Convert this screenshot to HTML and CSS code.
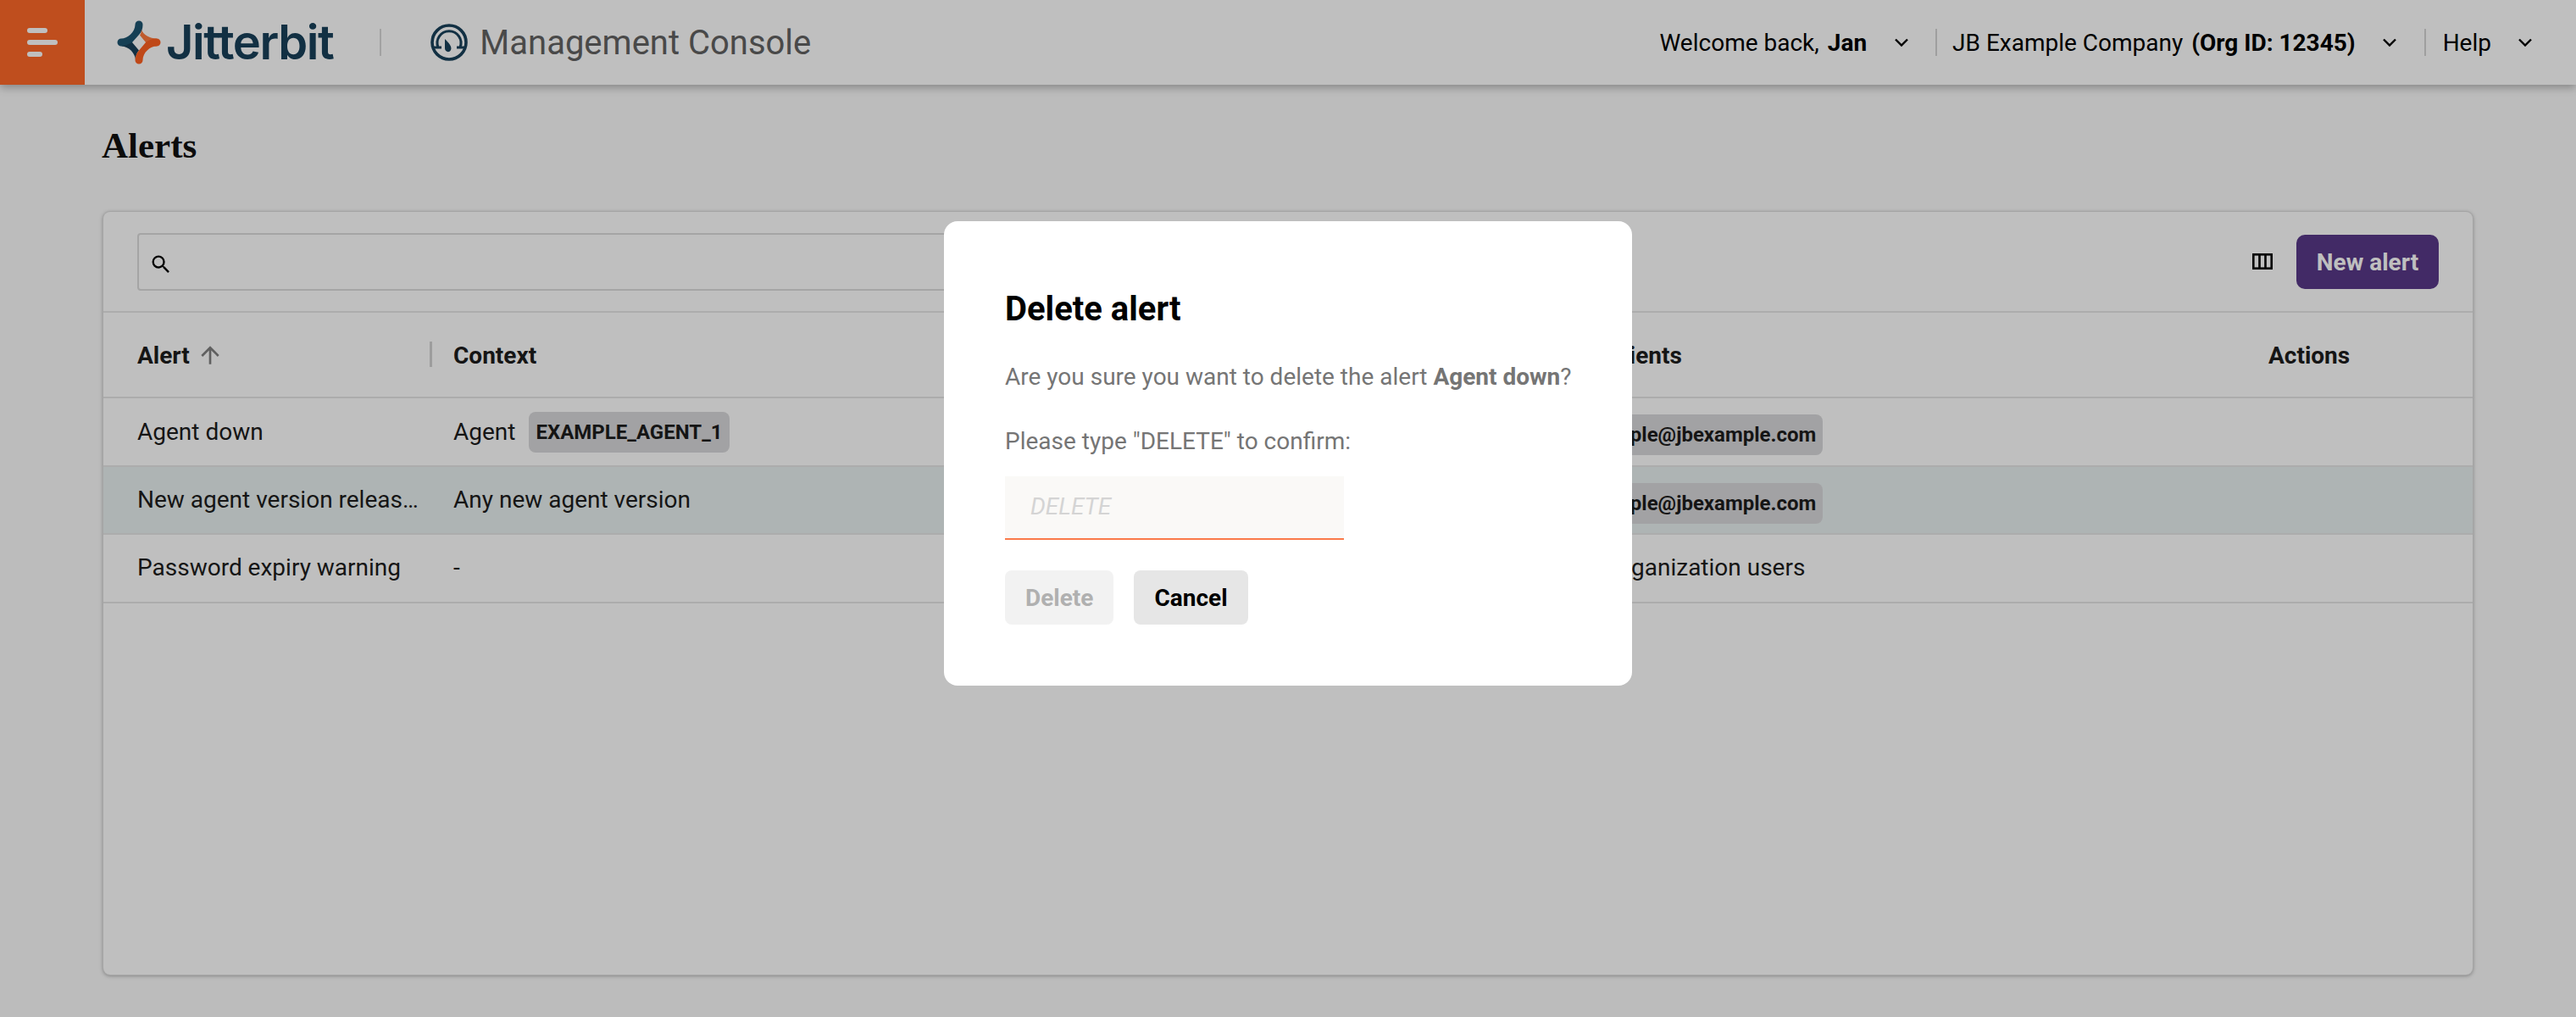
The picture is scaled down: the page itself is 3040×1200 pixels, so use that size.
FILE: index.html
```html
<!DOCTYPE html>
<html lang="en">
<head>
<meta charset="utf-8">
<title>Alerts - Management Console</title>
<link rel="stylesheet" href="styles.css">
</head>
<body>
<header class="topbar">
  <button class="menu-btn" aria-label="Menu"><span class="bar bar-a"></span><span class="bar bar-b"></span><span class="bar bar-c"></span></button>
  <div class="brand">
    <svg class="logo-mark" viewBox="0 0 52 52">
      <path fill="#18405a" d="M14 26L18 26L26 35.5C23.5 38 22.5 41 22 46C21 39 15 31 5 30.5Z"/>
      <path fill="#1d5471" d="M21.5 5A4.5 4.5 0 0 1 30.5 5C30.5 10 29 14 26 17L18 26C14 28 9 30.5 5 30.5A4.5 4.5 0 0 1 5 21.5C12 21.5 21.5 14 21.5 5Z"/>
      <path fill="#ff7a3e" d="M29 11C31 17 39 21.5 47 21.5V30.5C43 30.5 38 29 34 26L27 17.5C28.5 15.5 29 13 29 11Z"/>
      <path fill="#ff6020" d="M47 21.5A4.5 4.5 0 0 1 47 30.5C39 30.5 30.5 38 30.5 47A4.5 4.5 0 0 1 21.5 47C21.5 43 23 38.5 26 35.5L34 26C37 23.5 42 21.5 47 21.5Z"/>
    </svg>
    <span class="logo-text">Jitterbit</span>
  </div>
  <span class="brand-sep"></span>
  <svg class="gauge" viewBox="0 0 44 44" fill="none" stroke="#18405a">
    <circle cx="22" cy="22" r="20" stroke-width="3.6"/>
    <path d="M9 28A14 14 0 1 1 35 28" stroke-width="3"/>
    <path d="M3 28H13M31 28H41" stroke-width="3"/>
    <path d="M17 18C21 22 26 27 24 31C22 35 17 33 17 29Z" fill="#18405a" stroke="none"/>
  </svg>
  <span class="app-name">Management Console</span>
  <nav class="user-nav">
    <div class="nav-item nav-welcome"><span>Welcome back, <b>Jan</b></span><svg class="chev" viewBox="0 0 16 10"><path d="M1 1.5l7 7 7-7"/></svg></div>
    <div class="nav-item nav-org"><span>JB Example Company <b>(Org ID: 12345)</b></span><svg class="chev" viewBox="0 0 16 10"><path d="M1 1.5l7 7 7-7"/></svg></div>
    <div class="nav-item nav-help"><span>Help</span><svg class="chev" viewBox="0 0 16 10"><path d="M1 1.5l7 7 7-7"/></svg></div>
  </nav>
</header>

<main class="page">
  <h1 class="page-title">Alerts</h1>
  <section class="card">
    <div class="toolbar">
      <div class="search">
        <svg class="search-icon" viewBox="0 0 24 24"><path d="M15.5 14h-.79l-.28-.27A6.47 6.47 0 0 0 16 9.5 6.5 6.5 0 1 0 9.5 16c1.61 0 3.09-.59 4.23-1.57l.27.28v.79l5 4.99L20.49 19l-4.99-5zm-6 0C7.01 14 5 11.99 5 9.5S7.01 5 9.5 5 14 7.01 14 9.5 11.99 14 9.5 14z"/></svg>
      </div>
      <svg class="col-icon" viewBox="0 0 24 19" fill="none" stroke="#000" stroke-width="2.6"><rect x="1.3" y="1.3" width="21.4" height="16.4"/><path d="M8.5 1v17M15.5 1v17"/></svg>
      <button class="btn-primary">New alert</button>
    </div>
    <div class="row row-head">
      <div class="cell cell-alert head-alert">Alert <svg class="sort" viewBox="0 0 24 24"><path d="M4 12l1.41 1.41L11 7.83V20h2V7.83l5.58 5.59L20 12l-8-8-8 8z"/></svg><span class="col-sep"></span></div>
      <div class="cell">Context</div>
      <div class="cell">Recipients</div>
      <div class="cell">Actions</div>
    </div>
    <div class="row">
      <div class="cell cell-alert"><span class="clip">Agent down</span></div>
      <div class="cell">Agent <span class="chip chip-ctx">EXAMPLE_AGENT_1</span></div>
      <div class="cell"><span class="chip chip-mail">example@jbexample.com</span></div>
      <div class="cell"></div>
    </div>
    <div class="row row-active">
      <div class="cell cell-alert"><span class="clip">New agent version release available</span></div>
      <div class="cell">Any new agent version</div>
      <div class="cell"><span class="chip chip-mail">example@jbexample.com</span></div>
      <div class="cell"></div>
    </div>
    <div class="row">
      <div class="cell cell-alert"><span class="clip">Password expiry warning</span></div>
      <div class="cell">-</div>
      <div class="cell cell-users">All organization users</div>
      <div class="cell"></div>
    </div>
  </section>
</main>

<div class="overlay">
  <div class="dialog">
    <h2 class="dialog-title">Delete alert</h2>
    <p class="dialog-text">Are you sure you want to delete the alert <b>Agent down</b>?</p>
    <p class="dialog-text dialog-prompt">Please type "DELETE" to confirm:</p>
    <input class="confirm-input" type="text" placeholder="DELETE">
    <div class="dialog-actions">
      <button class="btn btn-disabled">Delete</button>
      <button class="btn btn-cancel">Cancel</button>
    </div>
  </div>
</div>
</body>
</html>
```

FILE: styles.css
```css
* { box-sizing: border-box; }
html, body { margin: 0; height: 100%; }
body {
  width: 3040px;
  height: 1200px;
  overflow: hidden;
  position: relative;
  background: #fbfbfb;
  font-family: Roboto, "Liberation Sans", sans-serif;
  font-size: 28px;
  color: #1c1c1c;
}
b { font-weight: 700; }

.topbar {
  height: 100px;
  display: flex;
  align-items: center;
  background: #fff;
  box-shadow: 0 3px 10px rgba(0, 0, 0, .3);
  position: relative;
}
.menu-btn {
  width: 100px;
  height: 100px;
  flex: none;
  border: 0;
  padding: 33px 0 0 32px;
  background: #ff6928;
  display: flex;
  flex-direction: column;
  align-items: flex-start;
  gap: 8px;
}
.bar { display: block; height: 6px; border-radius: 3px; background: #fff; }
.bar-a { width: 24px; }
.bar-b { width: 36px; }
.bar-c { width: 18px; }

.brand { display: flex; align-items: center; margin-left: 38px; gap: 6px; }
.logo-mark { width: 52px; height: 52px; flex: none; }
.logo-text {
  font-family: Inter, sans-serif;
  font-size: 56px;
  font-weight: 600;
  letter-spacing: -1.4px;
  color: #18405a;
  line-height: 60px;
}
.brand-sep { width: 2px; height: 32px; background: #d9d9d9; margin-left: 55px; }
.gauge { width: 44px; height: 44px; margin-left: 58px; flex: none; }
.app-name { margin-left: 14px; font-size: 40px; color: #626262; }

.user-nav { margin-left: auto; display: flex; align-items: center; height: 32px; }
.nav-item { display: flex; align-items: center; height: 32px; color: #000; }
.nav-welcome { padding-right: 32px; }
.nav-org { border-left: 2px solid #d4d4d4; padding: 0 33px 0 18px; }
.nav-help { border-left: 2px solid #d4d4d4; padding: 0 52px 0 20px; }
.nav-item b { font-weight: 700; margin-left: 3px; }
.chev {
  width: 16px;
  height: 10px;
  margin-left: 33px;
  fill: none;
  stroke: #000;
  stroke-width: 2.4;
}
.nav-org .chev { margin-left: 32px; }
.nav-help .chev { margin-left: 32px; }

.page { padding: 48px 122px 0; }
.page-title {
  margin: 0 0 54px -2px;
  font-family: "Liberation Serif", serif;
  font-size: 43px;
  line-height: 48px;
  font-weight: 700;
  color: #111;
}
.card {
  height: 900px;
  background: #fff;
  border-radius: 8px;
  box-shadow: 0 0 0 1px #dcdcdc, 0 1px 5px rgba(0, 0, 0, .4);
}
.toolbar {
  height: 119px;
  padding: 25px 40px 0;
  display: flex;
  align-items: flex-start;
  border-bottom: 2px solid #e6e6e6;
}
.search {
  width: 1400px;
  height: 68px;
  border: 2px solid #dcdcdc;
  border-radius: 4px;
  padding: 21px 0 0 12px;
}
.search-icon { display: block; width: 28px; height: 28px; fill: #000; }
.col-icon { width: 24px; height: 19px; margin: 24px 0 0 auto; }
.btn-primary {
  margin-left: 28px;
  margin-top: 2px;
  width: 168px;
  height: 64px;
  border: 0;
  border-radius: 10px;
  background: #593888;
  color: #fff;
  font: 700 28px Roboto, sans-serif;
}

.row {
  display: grid;
  grid-template-columns: 373px 1317px 825px 1fr;
  height: 80.5px;
  padding-left: 40px;
  border-bottom: 2px solid #e6e6e6;
  align-items: center;
}
.row:last-child { padding-bottom: 2px; }
.row-head { height: 101px; font-weight: 700; padding-top: 1px; }
.row-active { background: #e8f0f0; }
.cell { display: flex; align-items: center; min-width: 0; white-space: pre; }
.cell-alert { padding-right: 40px; }
.cell-users { padding-left: 9px; }
.clip { overflow: hidden; text-overflow: ellipsis; }
.head-alert { position: relative; }
.sort { width: 32px; height: 32px; fill: #808080; margin-left: 1px; }
.col-sep { position: absolute; left: 345px; top: 0; width: 3px; height: 30px; background: #d2d2d2; }
.chip {
  height: 48px;
  display: inline-flex;
  align-items: center;
  padding: 0 8px;
  margin-left: 9px;
  border-radius: 8px;
  background: #d9d9db;
  font-size: 24px;
  font-weight: 700;
}
.chip-ctx { margin-top: 2px; }
.chip-mail { margin: 8px 0 0 5px; }

.overlay {
  position: absolute;
  inset: 0;
  background: rgba(0, 0, 0, .25);
  display: flex;
  justify-content: center;
  align-items: flex-start;
  padding-top: 261px;
}
.dialog {
  width: 812px;
  height: 548px;
  padding: 80px 72px 0;
  background: #fff;
  border-radius: 16px;
}
.dialog-title {
  margin: 0 0 36px;
  font-size: 40px;
  line-height: 48px;
  font-weight: 700;
  color: #000;
}
.dialog-text { margin: 0; line-height: 40px; color: #757575; white-space: nowrap; }
.dialog-prompt { margin-top: 36px; }
.confirm-input {
  display: block;
  width: 400px;
  height: 75px;
  margin-top: 21px;
  padding: 0 30px 2px;
  border: 0;
  border-bottom: 2px solid #fa7a4a;
  background: #faf9f7;
  font: italic 28px Roboto, sans-serif;
  outline: 0;
}
.confirm-input::placeholder { color: #d4d4d4; opacity: 1; }
.dialog-actions { display: flex; gap: 24px; margin-top: 36px; }
.btn {
  height: 64px;
  padding: 0 24px;
  border: 0;
  border-radius: 8px;
  font: 700 28px Roboto, sans-serif;
}
.btn-disabled { background: #f2f2f2; color: #b0b0b0; }
.btn-cancel { background: #e6e6e6; color: #000; }
```
